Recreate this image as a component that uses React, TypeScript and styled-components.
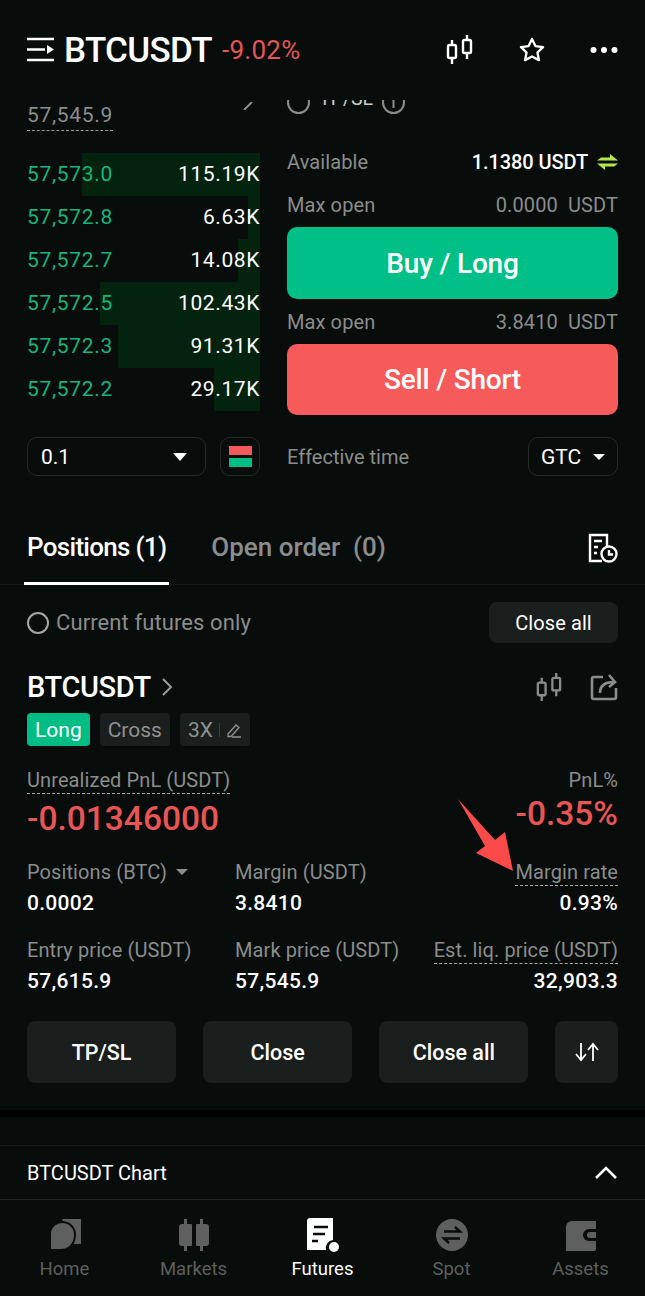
import React from 'react';
import styled, { createGlobalStyle } from 'styled-components';

const GlobalStyle = createGlobalStyle`
  html, body {
    margin: 0;
    padding: 0;
    background: #080c0a;
  }
  * {
    box-sizing: border-box;
  }
`;

const Page = styled.div`
  width: 645px;
  height: 1296px;
  overflow: hidden;
  display: flex;
  flex-direction: column;
  background: #080c0a;
  color: #fff;
  font-family: Roboto, 'Noto Sans', sans-serif;
  position: relative;
`;

const Header = styled.header`
  height: 92px;
  padding: 8px 27px 0;
  display: flex;
  align-items: center;
  flex-shrink: 0;
`;

const MenuIcon = styled.svg`
  width: 28px;
  height: 28px;
  margin-right: 9px;
`;

const Symbol = styled.div`
  font-size: 35px;
  font-weight: 500;
  letter-spacing: -0.7px;
`;

const Change = styled.div`
  font-size: 26px;
  color: #e55656;
  margin-left: 10px;
  letter-spacing: 0.3px;
`;

const HeaderIcons = styled.div`
  margin-left: auto;
  display: flex;
  align-items: center;
  gap: 44px;
`;

const Trade = styled.section`
  height: 384px;
  padding: 0 27px;
  display: flex;
  gap: 27px;
  overflow: hidden;
  flex-shrink: 0;
`;

const BookColumn = styled.div`
  width: 233px;
  display: flex;
  flex-direction: column;
`;

const LastPriceRow = styled.div`
  height: 61px;
  padding-top: 11px;
  display: flex;
  justify-content: space-between;
  align-items: flex-start;
`;

const ClippedChevron = styled.svg`
  margin: -1px 7px 0 0;
`;

const LastPrice = styled.span`
  font-size: 21px;
  color: #8b8d8c;
  letter-spacing: 0.7px;
  padding-bottom: 3px;
  border-bottom: 1px dashed #9a9c9b;
  line-height: 24px;
  display: inline-block;
`;

const BookRow = styled.div`
  height: 43px;
  padding-bottom: 2px;
  display: flex;
  align-items: center;
  justify-content: space-between;
  position: relative;
`;

const DepthBar = styled.div`
  position: absolute;
  top: 0;
  bottom: 0;
  right: 0;
  background: #04230f;
`;

const BookPrice = styled.span`
  position: relative;
  font-size: 21px;
  color: #14b57e;
  letter-spacing: 0.7px;
`;

const BookSize = styled.span`
  position: relative;
  font-size: 21px;
  color: #fff;
  letter-spacing: 0.6px;
`;

const BookFooter = styled.div`
  margin-top: 26px;
  display: flex;
  gap: 14px;
`;

const Select = styled.div`
  flex: 1;
  height: 39px;
  border: 1px solid #252a28;
  border-radius: 10px;
  padding: 0 18px 0 13px;
  display: flex;
  align-items: center;
  justify-content: space-between;
  font-size: 21px;
`;

const LayoutToggle = styled.div`
  width: 40px;
  height: 39px;
  border: 1px solid #252a28;
  border-radius: 10px;
  display: flex;
  flex-direction: column;
  align-items: center;
  justify-content: center;
  gap: 3px;
`;

const ToggleBar = styled.div<{ $color: string }>`
  width: 23px;
  height: 9px;
  background: ${(p) => p.$color};
`;

const FormColumn = styled.div`
  flex: 1;
  display: flex;
  flex-direction: column;
`;

const TpslRow = styled.div`
  height: 14px;
  margin-top: 8px;
  overflow: hidden;
  display: flex;
  align-items: flex-end;
  gap: 9px;
  color: #c9cbca;
  font-size: 19.5px;
`;

const TpslCircle = styled.span`
  width: 23px;
  height: 23px;
  border: 2px solid #8b8d8c;
  border-radius: 50%;
  flex-shrink: 0;
`;

const TpslText = styled.span`
  line-height: 20px;
  margin-bottom: 5px;
`;

const InfoRow = styled.div<{ $h: number }>`
  display: flex;
  align-items: center;
  justify-content: space-between;
  height: ${(p) => p.$h}px;
  font-size: 20px;
  color: #8b8d8c;
  letter-spacing: 0.1px;
`;

const AvailableRow = styled(InfoRow)`
  margin-top: 27px;
`;

const InfoValue = styled.span<{ $bright?: boolean }>`
  color: ${(p) => (p.$bright ? '#fff' : '#8b8d8c')};
  font-weight: ${(p) => (p.$bright ? 500 : 400)};
  letter-spacing: ${(p) => (p.$bright ? '-0.1px' : '0.1px')};
  display: flex;
  align-items: center;
  gap: 9px;
`;

const ActionButton = styled.div<{ $color: string; $h: number }>`
  height: ${(p) => p.$h}px;
  flex-shrink: 0;
  border-radius: 10px;
  background: ${(p) => p.$color};
  display: flex;
  align-items: center;
  justify-content: center;
  font-size: 28px;
  font-weight: 500;
  letter-spacing: -0.2px;
  color: #fff;
`;

const TimeRow = styled.div`
  margin-top: 22px;
  height: 39px;
  display: flex;
  align-items: center;
  justify-content: space-between;
  font-size: 20px;
  color: #8b8d8c;
`;

const TimeSelect = styled.div`
  width: 90px;
  height: 39px;
  border: 1px solid #252a28;
  border-radius: 10px;
  display: flex;
  align-items: center;
  justify-content: center;
  gap: 12px;
  color: #fff;
  font-size: 21px;
`;

const Caret = styled.span<{ $color?: string; $size?: number }>`
  width: 0;
  height: 0;
  border-left: ${(p) => p.$size ?? 7}px solid transparent;
  border-right: ${(p) => p.$size ?? 7}px solid transparent;
  border-top: ${(p) => ((p.$size ?? 7) * 8) / 7}px solid ${(p) => p.$color ?? '#fff'};
`;

const Tabs = styled.nav`
  height: 109px;
  padding: 39px 27px 0 24px;
  display: flex;
  align-items: flex-start;
  border-bottom: 1px solid #161b19;
  flex-shrink: 0;
`;

const Tab = styled.div<{ $active?: boolean }>`
  height: 70px;
  padding: 17px 3px 0;
  margin-right: 39px;
  font-size: 26px;
  line-height: 30px;
  font-weight: 500;
  letter-spacing: ${(p) => (p.$active ? '-0.7px' : '0')};
  color: ${(p) => (p.$active ? '#fff' : '#8b8d8c')};
  border-bottom: ${(p) => (p.$active ? '3px solid #fff' : 'none')};
  white-space: pre;
`;

const TabIcon = styled.svg`
  margin-left: auto;
  margin-top: 18px;
`;

const Positions = styled.section`
  padding: 17px 27px 0;
  flex-shrink: 0;
`;

const FilterRow = styled.div`
  height: 41px;
  display: flex;
  align-items: center;
  gap: 7px;
  color: #8b8d8c;
  font-size: 22px;
  letter-spacing: 0.1px;
`;

const Radio = styled.span`
  width: 22px;
  height: 22px;
  border: 2px solid #a5a7a6;
  border-radius: 50%;
`;

const CloseAllChip = styled.div`
  margin-left: auto;
  width: 129px;
  height: 41px;
  border-radius: 8px;
  background: #1a1e1c;
  color: #fff;
  display: flex;
  align-items: center;
  justify-content: center;
  font-size: 20px;
`;

const PositionHead = styled.div`
  margin-top: 22px;
  height: 44px;
  display: flex;
  align-items: center;
`;

const PositionName = styled.div`
  font-size: 29px;
  font-weight: 500;
  letter-spacing: -0.4px;
`;

const PositionIcons = styled.div`
  margin-left: auto;
  display: flex;
  align-items: center;
  gap: 27px;
`;

const TagRow = styled.div`
  margin-top: 4px;
  display: flex;
  gap: 10px;
`;

const Tag = styled.div<{ $long?: boolean }>`
  height: 33px;
  padding: 0 8px;
  border-radius: 4px;
  display: flex;
  align-items: center;
  gap: 6px;
  font-size: 21px;
  background: ${(p) => (p.$long ? '#00bd83' : '#1a1e1c')};
  color: ${(p) => (p.$long ? '#fff' : '#8f918f')};
`;

const TagDivider = styled.span`
  width: 1px;
  height: 14px;
  background: #3a3e3c;
`;

const PnlRow = styled.div`
  margin-top: 21px;
  display: flex;
  justify-content: space-between;
`;

const PnlBlock = styled.div<{ $right?: boolean }>`
  display: flex;
  flex-direction: column;
  align-items: ${(p) => (p.$right ? 'flex-end' : 'flex-start')};
`;

const Label = styled.span<{ $dashed?: boolean }>`
  font-size: 20px;
  line-height: 24px;
  color: #8b8d8c;
  letter-spacing: 0.1px;
  white-space: nowrap;
  display: inline-flex;
  align-items: center;
  gap: 9px;
  height: 27px;
  border-bottom: ${(p) => (p.$dashed ? '1px dashed #a5a7a6' : '1px solid transparent')};
`;

const PnlValue = styled.span<{ $raised?: boolean }>`
  font-size: 33.5px;
  line-height: 50px;
  font-weight: 500;
  color: #e85555;
  margin-top: ${(p) => (p.$raised ? '-5px' : '0')};
`;

const StatGrid = styled.div`
  margin-top: 15px;
  display: grid;
  grid-template-columns: 208px 1fr auto;
  row-gap: 21px;
`;

const Stat = styled.div<{ $right?: boolean }>`
  display: flex;
  flex-direction: column;
  gap: 4px;
  align-items: ${(p) => (p.$right ? 'flex-end' : 'flex-start')};
`;

const StatValue = styled.span`
  font-size: 21px;
  line-height: 26px;
  font-weight: 500;
  letter-spacing: 0.3px;
`;

const ButtonRow = styled.div`
  margin-top: 27px;
  display: flex;
  gap: 27px;
`;

const PosButton = styled.div<{ $icon?: boolean }>`
  width: ${(p) => (p.$icon ? '63px' : '150px')};
  height: 62px;
  border-radius: 8px;
  background: #1a1e1c;
  display: flex;
  align-items: center;
  justify-content: center;
  font-size: 21.5px;
  font-weight: 500;
`;

const Gutter = styled.div`
  margin-top: 27px;
  height: 7px;
  background: #000;
  flex-shrink: 0;
`;

const ChartBar = styled.div`
  margin-top: 28px;
  height: 55px;
  border-top: 1px solid #171c1a;
  border-bottom: 1px solid #222725;
  padding: 0 27px;
  display: flex;
  align-items: center;
  justify-content: space-between;
  font-size: 20px;
  flex-shrink: 0;
`;

const TabBar = styled.footer`
  flex: 1;
  display: grid;
  grid-template-columns: repeat(5, 1fr);
`;

const TabItem = styled.div<{ $active?: boolean }>`
  display: flex;
  flex-direction: column;
  align-items: center;
  padding-top: 18px;
  font-size: 18.5px;
  line-height: 22px;
  color: ${(p) => (p.$active ? '#fff' : '#5d605e')};
  gap: 6px;
`;

const Arrow = styled.svg`
  position: absolute;
  left: 453px;
  top: 795px;
`;

const CandleIcon = ({ color, size = 30 }: { color: string; size?: number }) => (
  <svg width={size} height={size} viewBox="0 0 30 30" fill="none" stroke={color} strokeWidth="2.4">
    <rect x="4" y="10" width="8" height="13" rx="1.5" />
    <path d="M8 5v5M8 23v6" />
    <rect x="19" y="5" width="8" height="13" rx="1.5" />
    <path d="M23 0v5M23 18v6" />
  </svg>
);

const depths = [
  { price: '57,573.0', size: '115.19K', width: 178 },
  { price: '57,572.8', size: '6.63K', width: 12 },
  { price: '57,572.7', size: '14.08K', width: 22 },
  { price: '57,572.5', size: '102.43K', width: 160 },
  { price: '57,572.3', size: '91.31K', width: 142 },
  { price: '57,572.2', size: '29.17K', width: 46 },
];

const stats = [
  { label: 'Positions (BTC)', value: '0.0002', caret: true },
  { label: 'Margin (USDT)', value: '3.8410' },
  { label: 'Margin rate', value: '0.93%', dashed: true, right: true },
  { label: 'Entry price (USDT)', value: '57,615.9' },
  { label: 'Mark price (USDT)', value: '57,545.9' },
  { label: 'Est. liq. price (USDT)', value: '32,903.3', dashed: true, right: true },
];

const App = () => (
  <Page>
    <GlobalStyle />
    <Header>
      <MenuIcon viewBox="0 0 28 28" fill="none">
        <path d="M0 3h27M0 13.5h18M0 24h27" stroke="#fff" strokeWidth="2.4" />
        <path d="M20 9l7 4.5-7 4.5z" fill="#fff" />
      </MenuIcon>
      <Symbol>BTCUSDT</Symbol>
      <Change>-9.02%</Change>
      <HeaderIcons>
        <CandleIcon color="#fff" />
        <svg width="28" height="28" viewBox="0 0 24 24" fill="none" stroke="#fff" strokeWidth="2" strokeLinejoin="round">
          <path d="M12 2.5l2.9 6.1 6.6.9-4.8 4.6 1.2 6.6-5.9-3.2-5.9 3.2 1.2-6.6L2.500 9.500l6.600-.9z" />
        </svg>
        <svg width="28" height="8" viewBox="0 0 28 8" fill="#fff">
          <circle cx="3.5" cy="4" r="3" />
          <circle cx="14" cy="4" r="3" />
          <circle cx="24.5" cy="4" r="3" />
        </svg>
      </HeaderIcons>
    </Header>

    <Trade>
      <BookColumn>
        <LastPriceRow>
          <LastPrice>57,545.9</LastPrice>
          <ClippedChevron width="10" height="8" viewBox="0 0 10 8" fill="none" stroke="#8b8d8c" strokeWidth="2">
            <path d="M9 0L1 8" />
          </ClippedChevron>
        </LastPriceRow>
        {depths.map((row) => (
          <BookRow key={row.price}>
            <DepthBar style={{ width: row.width }} />
            <BookPrice>{row.price}</BookPrice>
            <BookSize>{row.size}</BookSize>
          </BookRow>
        ))}
        <BookFooter>
          <Select>
            0.1
            <Caret />
          </Select>
          <LayoutToggle>
            <ToggleBar $color="#f15a59" />
            <ToggleBar $color="#00bd83" />
          </LayoutToggle>
        </BookFooter>
      </BookColumn>
      <FormColumn>
        <TpslRow>
          <TpslCircle />
          <TpslText>TP/SL</TpslText>
          <svg width="23" height="23" viewBox="0 0 23 23" fill="none" stroke="#8b8d8c" strokeWidth="2" style={{ flexShrink: 0 }}>
            <circle cx="11.5" cy="11.5" r="10.5" />
            <path d="M11.5 9v8" />
          </svg>
        </TpslRow>
        <AvailableRow $h={42}>
          Available
          <InfoValue $bright>
            1.1380 USDT
            <svg width="21" height="16" viewBox="0 0 21 16" fill="#b4e84a">
              <path d="M0 6.500h21L13 0v3.500H4zM21 9.500H0l8 6.500v-3.500h9z" />
            </svg>
          </InfoValue>
        </AvailableRow>
        <InfoRow $h={44}>
          Max open
          <InfoValue>0.0000&nbsp; USDT</InfoValue>
        </InfoRow>
        <ActionButton $color="#00c087" $h={72}>Buy / Long</ActionButton>
        <InfoRow $h={45}>
          Max open
          <InfoValue>3.8410&nbsp; USDT</InfoValue>
        </InfoRow>
        <ActionButton $color="#f75a5a" $h={71}>Sell / Short</ActionButton>
        <TimeRow>
          Effective time
          <TimeSelect>
            GTC
            <Caret $size={6} />
          </TimeSelect>
        </TimeRow>
      </FormColumn>
    </Trade>

    <Tabs>
      <Tab $active>Positions (1)</Tab>
      <Tab>{'Open order  (0)'}</Tab>
      <TabIcon width="30" height="30" viewBox="0 0 30 30" fill="none" stroke="#fff" strokeWidth="2.4">
        <path d="M14 28H2V2h17v11" />
        <path d="M6 8h8M6 14h4M6 20h3" />
        <circle cx="21" cy="21" r="7.5" fill="#080c0a" />
        <path d="M21 17v4.5h4" />
      </TabIcon>
    </Tabs>

    <Positions>
      <FilterRow>
        <Radio />
        Current futures only
        <CloseAllChip>Close all</CloseAllChip>
      </FilterRow>

      <PositionHead>
        <PositionName>BTCUSDT</PositionName>
        <svg width="16" height="20" viewBox="0 0 16 20" fill="none" stroke="#9b9d9c" strokeWidth="2" style={{ marginLeft: 9 }}>
          <path d="M3 2l8 8-8 8" />
        </svg>
        <PositionIcons>
          <CandleIcon color="#8b8d8c" size={29} />
          <svg width="28" height="28" viewBox="0 0 28 28" fill="none" stroke="#8b8d8c" strokeWidth="2.6">
            <path d="M13 4H4a2 2 0 0 0-2 2v18a2 2 0 0 0 2 2h20a2 2 0 0 0 2-2v-9" />
            <path d="M10 20c0-7 5-11 14-11M19 2l6 7-6 5" />
          </svg>
        </PositionIcons>
      </PositionHead>

      <TagRow>
        <Tag $long>Long</Tag>
        <Tag>Cross</Tag>
        <Tag>
          3X
          <TagDivider />
          <svg width="16" height="16" viewBox="0 0 16 16" fill="none" stroke="#8f918f" strokeWidth="1.3">
            <path d="M2 12l8-9 3 2.500-8 9H2zM6 15h9" />
          </svg>
        </Tag>
      </TagRow>

      <PnlRow>
        <PnlBlock>
          <Label $dashed>Unrealized PnL (USDT)</Label>
          <PnlValue>-0.01346000</PnlValue>
        </PnlBlock>
        <PnlBlock $right>
          <Label>PnL%</Label>
          <PnlValue $raised>-0.35%</PnlValue>
        </PnlBlock>
      </PnlRow>

      <StatGrid>
        {stats.map((stat) => (
          <Stat key={stat.label} $right={stat.right}>
            <Label $dashed={stat.dashed}>
              {stat.label}
              {stat.caret && <Caret $color="#8b8d8c" $size={6} />}
            </Label>
            <StatValue>{stat.value}</StatValue>
          </Stat>
        ))}
      </StatGrid>

      <ButtonRow>
        <PosButton>TP/SL</PosButton>
        <PosButton>Close</PosButton>
        <PosButton>Close all</PosButton>
        <PosButton $icon>
          <svg width="26" height="20" viewBox="0 0 26 20" fill="none" stroke="#fff" strokeWidth="1.8">
            <path d="M7 1v17M2 12l5 6 5-6M19 19V2M14 8l5-6 5 6" />
          </svg>
        </PosButton>
      </ButtonRow>
    </Positions>

    <Gutter />

    <ChartBar>
      BTCUSDT Chart
      <svg width="24" height="14" viewBox="0 0 24 14" fill="none" stroke="#fff" strokeWidth="2.6">
        <path d="M2 12L12 2l10 10" />
      </svg>
    </ChartBar>

    <TabBar>
      <TabItem>
        <svg width="34" height="34" viewBox="0 0 34 34" fill="#5d605e">
          <path d="M14 1h19v25h-8z" />
          <path d="M2 32V16C2 9 8 4 14 4c7 0 13 5 13 13 0 9-6 15-15 15z" stroke="#080c0a" strokeWidth="2" />
        </svg>
        Home
      </TabItem>
      <TabItem>
        <svg width="34" height="34" viewBox="0 0 34 34" fill="#5d605e">
          <path d="M5 6h9a1 1 0 0 1 1 1v20a1 1 0 0 1-1 1H5a3 3 0 0 1-3-3V9a3 3 0 0 1 3-3zM7 1h3v5H7zM7 28h3v5H7z" />
          <path d="M20 6h9a3 3 0 0 1 3 3v16a3 3 0 0 1-3 3h-9a1 1 0 0 1-1-1V7a1 1 0 0 1 1-1zM23 1h3v5h-3zM23 28h3v5h-3z" />
        </svg>
        Markets
      </TabItem>
      <TabItem $active>
        <svg width="34" height="34" viewBox="0 0 34 34" fill="none">
          <path d="M4 0h23v22a8 8 0 0 0-7 10H1V3a3 3 0 0 1 3-3z" fill="#fff" />
          <path d="M8 9h14M7 16h12M6 23h6" stroke="#080c0a" strokeWidth="2.6" />
          <circle cx="28" cy="29" r="5" fill="#fff" />
        </svg>
        Futures
      </TabItem>
      <TabItem>
        <svg width="34" height="34" viewBox="0 0 34 34">
          <circle cx="17" cy="17" r="16" fill="#5d605e" />
          <path d="M9 13.500h16l-5-4.500M25 20.500H9l5 4.500" fill="none" stroke="#080c0a" strokeWidth="2.4" />
        </svg>
        Spot
      </TabItem>
      <TabItem>
        <svg width="34" height="34" viewBox="0 0 34 34">
          <path d="M8 3h24v28a2 2 0 0 1-2 2H2V9a6 6 0 0 1 6-6z" fill="#5d605e" />
          <path d="M32 11h-7a6 6 0 0 0 0 12h7z" fill="#080c0a" />
          <path d="M32 14h-6a3 3 0 0 0 0 6h6z" fill="#5d605e" />
        </svg>
        Assets
      </TabItem>
    </TabBar>

    <Arrow width="70" height="90" viewBox="0 0 70 90">
      <path d="M5 4L42 45l10-8 8 39-37-18 9-7z" fill="#fa4a4a" />
    </Arrow>
  </Page>
);

export default App;
